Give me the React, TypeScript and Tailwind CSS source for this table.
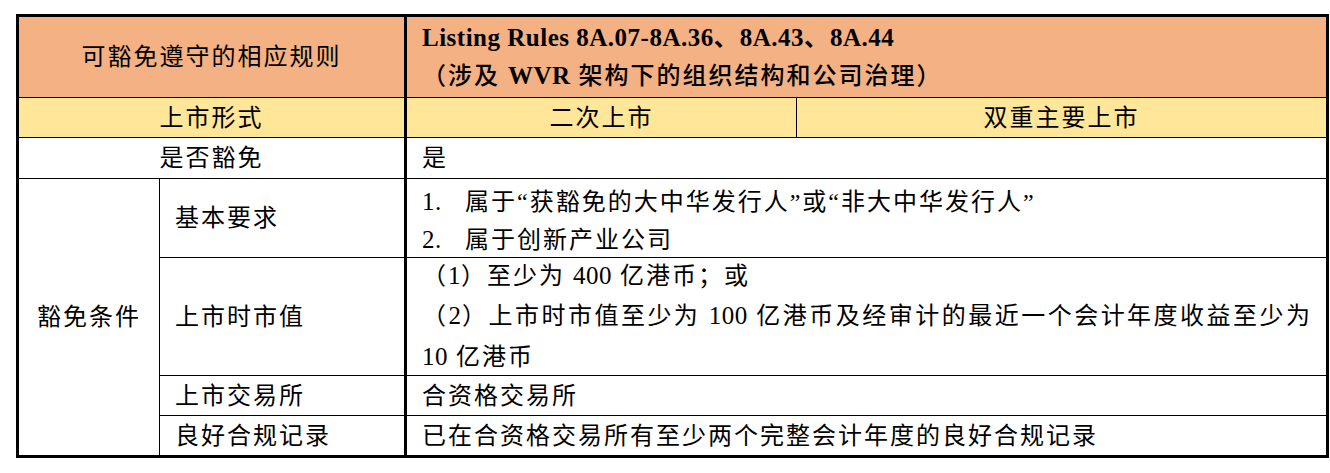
import React from "react";

const Latin: React.FC<{ children: React.ReactNode; bold?: boolean }> = ({ children, bold }) => (
  <span className={bold ? "text-[25px] font-bold tracking-[0.5px]" : "text-[25px] tracking-[0.5px]"}>{children}</span>
);

export default function App() {
  return (
    <div className="min-h-screen bg-white pt-[14px] pl-[16px] font-['Liberation_Serif','Noto_Sans_CJK_SC',serif] text-[24px] tracking-[2px] text-black">
      <div className="grid w-[1313px] grid-cols-[141px_247px_390px_529px] grid-rows-[81px_40px_41px_79px_118px_40px_39px] border-[3px] border-black">
        {/* header */}
        <div className="col-span-2 flex items-center justify-center border-r-[3px] border-b border-black bg-[#F4B183]">
          可豁免遵守的相应规则
        </div>
        <div className="col-span-2 flex flex-col justify-center border-b border-black bg-[#F4B183] pl-[15px] leading-[37px]">
          <div className="font-bold">
            <Latin bold>Listing Rules 8A.07-8A.36</Latin>、<Latin bold>8A.43</Latin>、<Latin bold>8A.44</Latin>
          </div>
          <div className="font-medium">
            （涉及 <Latin bold>WVR</Latin> 架构下的组织结构和公司治理）
          </div>
        </div>

        {/* listing type */}
        <div className="col-span-2 flex items-center justify-center border-r-[3px] border-b border-black bg-[#FFE699]">
          上市形式
        </div>
        <div className="flex items-center justify-center border-r border-b border-black bg-[#FFE699]">二次上市</div>
        <div className="flex items-center justify-center border-b border-black bg-[#FFE699]">双重主要上市</div>

        {/* exempt? */}
        <div className="col-span-2 flex items-center justify-center border-r-[3px] border-b border-black">是否豁免</div>
        <div className="col-span-2 flex items-center border-b border-black pl-[15px]">是</div>

        {/* conditions */}
        <div className="row-span-4 flex items-center justify-center border-r border-black">豁免条件</div>

        <div className="flex items-center border-r-[3px] border-b border-black pl-[15px]">基本要求</div>
        <div className="col-span-2 flex flex-col justify-center border-b border-black pl-[15px] pt-[5px] leading-[38px]">
          <div>
            <span className="inline-block w-[43px] text-[25px] tracking-[0.5px]">1.</span>属于“获豁免的大中华发行人”或“非大中华发行人”
          </div>
          <div>
            <span className="inline-block w-[43px] text-[25px] tracking-[0.5px]">2.</span>属于创新产业公司
          </div>
        </div>

        <div className="flex items-center border-r-[3px] border-b border-black pl-[15px]">上市时市值</div>
        <div className="col-span-2 flex flex-col justify-center border-b border-black pl-[15px] pr-[14px] leading-[39.5px]">
          <div>
            （<Latin>1</Latin>）至少为 <Latin>400</Latin> 亿港币；或
          </div>
          <div className="[text-align-last:justify]">
            （<Latin>2</Latin>）上市时市值至少为 <Latin>100</Latin> 亿港币及经审计的最近一个会计年度收益至少为
          </div>
          <div>
            <Latin>10</Latin> 亿港币
          </div>
        </div>

        <div className="flex items-center border-r-[3px] border-b border-black pl-[15px]">上市交易所</div>
        <div className="col-span-2 flex items-center border-b border-black pl-[15px]">合资格交易所</div>

        <div className="flex items-center border-r-[3px] border-black pl-[15px]">良好合规记录</div>
        <div className="col-span-2 flex items-center pl-[15px]">已在合资格交易所有至少两个完整会计年度的良好合规记录</div>
      </div>
    </div>
  );
}
